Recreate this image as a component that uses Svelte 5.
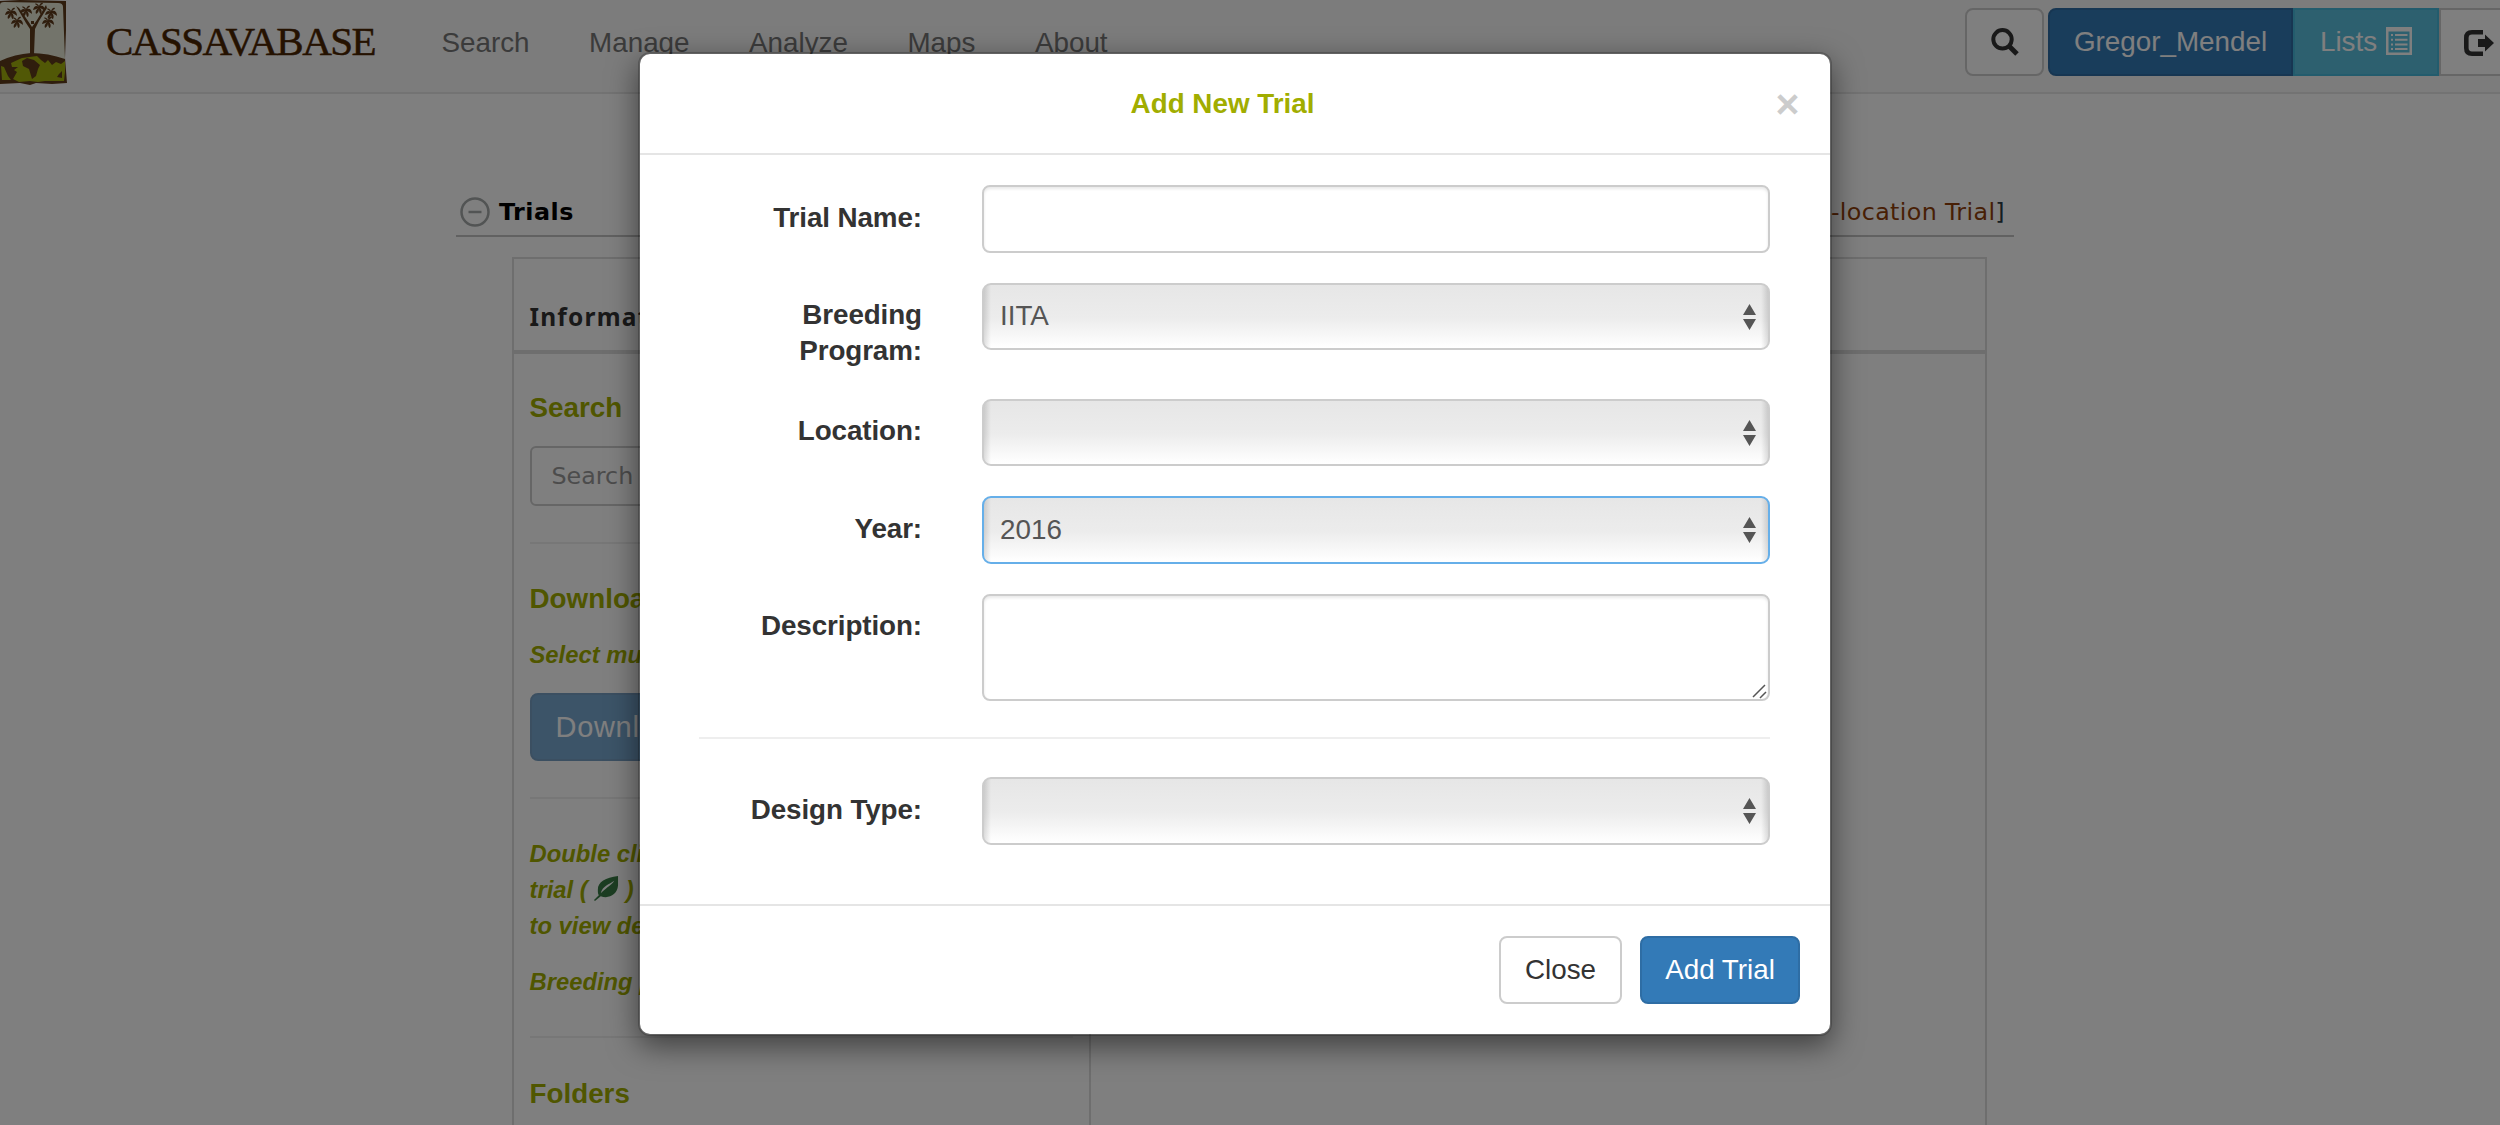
<script>
  const nav = ['Search', 'Manage', 'Analyze', 'Maps', 'About'];
  let name = $state('');
  let program = $state('IITA');
  let location = $state('');
  let year = $state('2016');
  let description = $state('');
  let design = $state('');
</script>

{#snippet arrows()}
  <svg class="arrows" viewBox="0 0 13 26"><path d="M6.5 0 13 11H0zM6.5 26 0 15h13z" /></svg>
{/snippet}

{#snippet cluster(x, y)}
  <g transform="translate({x} {y})">
    <path d="M0 0C-3-2-5-1-6 3-3 2-2 2-1 1-3 3-4 5-3 7-1 6 0 4 0 2 0 5 1 7 2 7 3 5 3 3 1 1 3 2 5 3 6 4 6 0 4-2 1-1 3-3 4-3 4-4 2-5 1-3 0-1-1-3-3-4-4-3z" />
  </g>
{/snippet}

<div class="page">
  <header class="navbar">
    <svg class="logo" viewBox="0 0 68 86">
      <path class="bark" d="M0 1 20 0 66 1 66 30 65 58 67 83 52 84 36 83 30 85 20 83 0 84z" />
      <path class="sky" d="M0 5Q0 2 4 2L58 3Q63 3 63 7L65 59Q48 53 31 53 15 54 0 61z" />
      <path class="bark" d="M30 54 30 29 26 23 16 6 19 8 28 21 32 27 37 20 46 5 47 8 39 21 35 29 34 54zM31 21h3v3h-3z" />
      <g class="bark">
        {@render cluster(11, 12)}
        {@render cluster(26, 10)}
        {@render cluster(39, 7)}
        {@render cluster(51, 12)}
        {@render cluster(17, 21)}
        {@render cluster(48, 21)}
      </g>
      <path class="land" d="M1 66 4 67 8 76 11 80 2 80zM11 63 22 58 37 56 41 60 45 63 48 60 52 65 56 62 61 64 65 61 65 72 64 81 45 81 38 82 30 81 19 82 13 79 17 72 14 70 18 67 12 67z" />
      <path class="bark" d="M22 61 27 58 34 60 40 65 38 69 36 76 32 79 29 69 23 66zM59 74 62 71 62 78 57 77z" />
    </svg>
    <span class="brand">CASSAVABASE</span>
    <nav>
      {#each nav as item}<a href="#{item}">{item}</a>{/each}
    </nav>
    <div class="tools">
      <button class="tool search" aria-label="Search">
        <svg viewBox="0 0 28 28"><circle cx="11.5" cy="11.3" r="9.2" fill="none" stroke="#333" stroke-width="4" /><path d="M18 18 26 26" stroke="#333" stroke-width="5" /></svg>
      </button>
      <div class="group">
        <button class="tool user">Gregor_Mendel</button>
        <button class="tool lists">Lists
          <svg viewBox="0 0 26 28"><path fill="#fff" fill-rule="evenodd" d="M0 0h26v28H0zM2.5 4.5v21h21v-21z" /><path fill="#fff" d="M5 7h2v2H5zM9 7h12.500v2H9zM5 11.700h2v2H5zM9 11.700h12.500v2H9zM5 16.400h2v2H5zM9 16.400h12.500v2H9zM5 21.100h2v2H5zM9 21.100h12.500v2H9z" /></svg>
        </button>
        <button class="tool logout" aria-label="Log out">
          <svg viewBox="0 0 30 26"><path d="M19 2.300H8Q2.300 2.300 2.300 8v10q0 5.700 5.700 5.700h11" fill="none" stroke="#333" stroke-width="4.600" /><path d="M14 9h7V4.500L30 13l-9 8.500V17h-7z" fill="#333" /></svg>
        </button>
      </div>
    </div>
  </header>

  <main>
    <div class="section">
      <svg class="collapse" viewBox="0 0 30 30"><circle cx="15" cy="15" r="13.500" /><path d="M8.500 15h13" /></svg>
      <b>Trials</b>
      <span class="action">[<a href="#multi">Add Multi-location Trial</a>]</span>
    </div>
    <div class="table">
      <div class="head">Information</div>
      <div class="columns">
        <aside>
          <h4>Search</h4>
          <input class="find" placeholder="Search" />
          <hr />
          <h4 class="dl">Download</h4>
          <h5>Select multiple</h5>
          <button class="download">Download</button>
          <hr />
          <h5 class="hint">Double click<br />trial (<svg viewBox="0 0 26 26"><path d="M25 0C12 2 4 6 4 14c0 3 0 4 1 6L0 25l1 1 6-5c8 3 17-1 18-11zM21 5C18 10 14 11 7 18 9 10 16 9 21 5z" /></svg>)<br />to view details</h5>
          <h5 class="programs">Breeding programs</h5>
          <hr />
          <h4 class="folders">Folders</h4>
        </aside>
        <section></section>
      </div>
    </div>
  </main>

  <div class="backdrop">
    <div class="modal" role="dialog" aria-modal="true">
      <div class="title">
        <h4>Add New Trial</h4>
        <button class="x" aria-label="Dismiss">×</button>
      </div>
      <form>
        <label for="name">Trial Name:</label>
        <input id="name" class="field" bind:value={name} />

        <label for="program">Breeding Program:</label>
        <div class="pick">
          <select id="program" class="field" bind:value={program}><option>IITA</option></select>{@render arrows()}
        </div>

        <label for="location">Location:</label>
        <div class="pick">
          <select id="location" class="field" bind:value={location}><option value=""></option></select>{@render arrows()}
        </div>

        <label for="year">Year:</label>
        <div class="pick">
          <select id="year" class="field active" bind:value={year}><option>2016</option></select>{@render arrows()}
        </div>

        <label for="description">Description:</label>
        <div class="pick">
          <textarea id="description" class="field" bind:value={description}></textarea>
          <svg class="grip" viewBox="0 0 15 15"><path d="M1 13 13 1M8 14 14 8" /></svg>
        </div>

        <hr />

        <label for="design">Design Type:</label>
        <div class="pick">
          <select id="design" class="field" bind:value={design}><option value=""></option></select>{@render arrows()}
        </div>
      </form>
      <footer>
        <button class="btn">Close</button>
        <button class="btn primary">Add Trial</button>
      </footer>
    </div>
  </div>
</div>

<style>
  :global(body) { margin: 0; }
  * { box-sizing: border-box; }
  .page {
    position: relative;
    width: 2500px;
    height: 1125px;
    overflow: hidden;
    background: #fff;
    color: #333;
    font: 27.8px/36px "Liberation Sans", Arial, sans-serif;
  }
  button, input, select, textarea { font: inherit; margin: 0; }
  a { text-decoration: none; color: inherit; }
  h4, h5 { margin: 0; font-weight: bold; color: #a1ad00; }
  h4 { font-size: 27.8px; }
  h5 { font-size: 23.8px; font-style: italic; }
  hr { margin: 0; border: 0; height: 2px; background: #eee; }

  .navbar {
    display: flex;
    height: 94px;
    background: #f8f8f8;
    border-bottom: 2px solid #e7e7e7;
  }
  .logo { width: 68px; height: 86px; flex: none; }
  .bark { fill: #5e3a1a; }
  .sky { fill: #e6e8d6; }
  .land { fill: #a3b00c; }
  .brand {
    width: 302px;
    margin-left: 38px;
    flex: none;
    color: #4a2400;
    font: 41px/82px "Liberation Serif", serif;
    letter-spacing: -1.5px;
    -webkit-text-stroke: 0.5px #4a2400;
  }
  nav { display: flex; gap: 59.5px; margin-left: 33.500px; padding-top: 25px; color: #777; }
  .tools { display: flex; gap: 4px; margin-left: auto; padding-top: 8px; margin-right: -33px; }
  .group { display: flex; }
  .tool {
    display: flex;
    align-items: center;
    justify-content: center;
    height: 68px;
    padding: 0;
    border: 2px solid #ccc;
    background: #fff;
    color: #fff;
  }
  .search { width: 79px; border-radius: 8px; }
  .search svg { width: 28px; height: 28px; }
  .user { width: 245px; background: #337ab7; border-color: #2e6da4; border-radius: 8px 0 0 8px; }
  .lists { width: 146px; gap: 9px; background: #5bc0de; border-color: #46b8da; }
  .lists svg { width: 26px; height: 28px; margin-top: -3px; }
  .logout { width: 94px; border-radius: 0 8px 8px 0; }
  .logout svg { width: 30px; height: 26px; margin: 2px 14px 0 0; }

  main { width: 1558px; margin-left: 456px; padding-top: 94px; }
  .section {
    display: flex;
    align-items: center;
    height: 49px;
    padding: 0 9px 0 4px;
    border-bottom: 2px solid #c2c2c2;
    color: #000;
    font: 23.8px/36px "DejaVu Sans", Verdana, sans-serif;
  }
  .section b { letter-spacing: 0.5px; }
  .collapse { width: 30px; height: 30px; margin-right: 9px; fill: none; stroke: #a4a8a8; stroke-width: 2.5; }
  .action { margin-left: auto; letter-spacing: 0.35px; color: #2a3a44; }
  .action a { color: #913f0a; }
  .table {
    width: 1475px;
    height: 900px;
    margin: 20px 0 0 56px;
    border: 2px solid #ddd;
  }
  .head {
    height: 95px;
    padding: 40px 15.500px 0;
    border-bottom: 4px solid #ddd;
    font: bold 24.500px/36px "Noto Sans", sans-serif;
    letter-spacing: 1.2px;
  }
  .columns { display: flex; height: 801px; }
  aside { width: 577px; padding: 36px 16px 0 15.500px; border-right: 2px solid #ddd; }
  .find {
    display: block;
    width: 540px;
    height: 60px;
    margin: 20px 0 36px;
    padding: 0 20px;
    border: 2px solid #ccc;
    border-radius: 6px;
    font: 23.8px/36px "DejaVu Sans", Verdana, sans-serif;
  }
  .find::placeholder { color: #999; }
  .dl { margin: 37px 0 20px; }
  .download {
    display: block;
    width: 200px;
    height: 68px;
    margin: 20px 0 36px;
    padding: 0 0 0 24px;
    text-align: left;
    border: 2px solid #2e6da4;
    border-radius: 8px;
    background: #337ab7;
    color: #fff;
    opacity: 0.65;
    font-size: 29px;
    letter-spacing: 0.7px;
  }
  .hint { margin-top: 37px; }
  .hint svg { width: 25px; height: 25px; margin: -2px 7px 0 6px; fill: #387a44; vertical-align: -3px; }
  .programs { margin: 20px 0 36px; }
  .folders { margin-top: 38px; }

  .backdrop { position: absolute; inset: 0; background: rgba(0, 0, 0, 0.5); padding: 52px 0 0 638px; }
  .modal {
    width: 1194px;
    height: 984px;
    border: 2px solid rgba(0, 0, 0, 0.2);
    border-radius: 12px;
    background: #fff;
    background-clip: padding-box;
    box-shadow: 0 10px 30px rgba(0, 0, 0, 0.5);
  }
  .title { display: flex; height: 101px; padding: 32px 30px 0; border-bottom: 2px solid #e5e5e5; }
  .title h4 { flex: 1; text-align: center; }
  .x { width: 25px; height: 36px; padding: 0; border: 0; background: none; color: #ccc; font: bold 41px/36px "Liberation Sans", Arial, sans-serif; }
  form {
    display: grid;
    grid-template-columns: 223px 788px;
    column-gap: 60px;
    row-gap: 30px;
    align-items: start;
    align-content: start;
    height: 749px;
    padding: 30px 59.500px 0 59px;
  }
  label { padding-top: 14.500px; margin-bottom: -0.500px; text-align: right; font-weight: bold; letter-spacing: -0.1px; }
  .pick { position: relative; height: 67.600px; }
  .pick:has(textarea) { height: 107.500px; }
  .field {
    display: block;
    width: 100%;
    height: 67.600px;
    padding: 0 18px 0 16px;
    border: 2px solid #ccc;
    border-radius: 8px;
    background: #fff;
    color: #555;
    outline: 0;
    box-shadow: inset 0 2px 3px rgba(0, 0, 0, 0.09);
  }
  select.field {
    appearance: none;
    padding-top: 0;
    border-radius: 9px;
    background:
      linear-gradient(90deg, rgba(0, 0, 0, 0.16), transparent 9px),
      linear-gradient(270deg, rgba(0, 0, 0, 0.16), transparent 9px),
      linear-gradient(#e6e6e6, #ececec 52%, #fff 96%);
    background-origin: border-box;
    box-shadow: none;
  }
  select.active { border-color: #66afe9; }
  textarea.field { height: 107.500px; resize: none; }
  .arrows { position: absolute; right: 14px; top: 21px; width: 13px; height: 26px; fill: #555; pointer-events: none; }
  .grip { position: absolute; right: 3px; bottom: 2px; width: 15px; height: 15px; fill: none; stroke: #555; stroke-width: 1.5; }
  form hr { grid-column: 1 / -1; margin: 6px 0 8px; }
  footer { display: flex; justify-content: flex-end; gap: 18px; padding: 30px; border-top: 2px solid #e5e5e5; }
  .btn {
    width: 123px;
    height: 68px;
    padding: 0;
    border: 2px solid #ccc;
    border-radius: 8px;
    background: #fff;
    color: #333;
  }
  .primary { width: 160px; background: #337ab7; border-color: #2e6da4; color: #fff; }
</style>
